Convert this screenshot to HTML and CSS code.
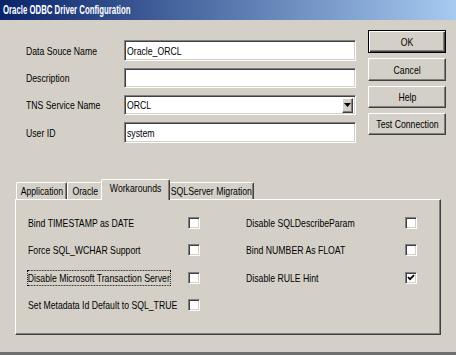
FILE: index.html
```html
<!DOCTYPE html>
<html>
<head>
<meta charset="utf-8">
<title>Oracle ODBC Driver Configuration</title>
<link rel="stylesheet" href="styles.css">
</head>
<body>
<div class="window">
  <div class="titlebar"><span class="t">Oracle ODBC Driver Configuration</span></div>
  <div class="main">
    <div class="form">
      <div class="row"><span class="label"><span class="t">Data Souce Name</span></span><div class="field"><span class="t">Oracle_ORCL</span></div></div>
      <div class="row"><span class="label"><span class="t">Description</span></span><div class="field short"></div></div>
      <div class="row"><span class="label"><span class="t">TNS Service Name</span></span><div class="field short select"><span class="t">ORCL</span><span class="arrow"><svg width="7" height="4" viewBox="0 0 7 4"><path d="M0 0H7L3.5 4Z" fill="#000"/></svg></span></div></div>
      <div class="row"><span class="label"><span class="t">User ID</span></span><div class="field"><span class="t">system</span></div></div>
    </div>
    <div class="buttons">
      <div class="btn default"><span class="t tc">OK</span></div>
      <div class="btn tall"><span class="t tc">Cancel</span></div>
      <div class="btn"><span class="t tc">Help</span></div>
      <div class="btn"><span class="t tc">Test Connection</span></div>
    </div>
  </div>
  <div class="tabs">
    <div class="tabstrip">
      <div class="tab tab-app"><span class="t tc">Application</span></div>
      <div class="tab tab-ora"><span class="t tc">Oracle</span></div>
      <div class="tab tab-work active"><span class="t tc">Workarounds</span></div>
      <div class="tab tab-sql"><span class="t tc">SQLServer Migration</span></div>
    </div>
    <div class="panel">
      <div class="col left">
        <div class="opt"><span class="text"><span class="t">Bind TIMESTAMP as DATE</span></span><span class="check"></span></div>
        <div class="opt"><span class="text"><span class="t">Force SQL_WCHAR Support</span></span><span class="check"></span></div>
        <div class="opt"><span class="text"><span class="t focus">Disable Microsoft Transaction Server</span></span><span class="check"></span></div>
        <div class="opt"><span class="text"><span class="t">Set Metadata Id Default to SQL_TRUE</span></span><span class="check"></span></div>
      </div>
      <div class="col right">
        <div class="opt"><span class="text"><span class="t">Disable SQLDescribeParam</span></span><span class="check"></span></div>
        <div class="opt"><span class="text"><span class="t">Bind NUMBER As FLOAT</span></span><span class="check"></span></div>
        <div class="opt"><span class="text"><span class="t">Disable RULE Hint</span></span><span class="check"><svg width="8" height="7" viewBox="0 0 8 7"><path d="M1 3.2L3 5.2L7 1.2" fill="none" stroke="#000" stroke-width="1.8"/></svg></span></div>
      </div>
    </div>
  </div>
</div>
</body>
</html>
```

FILE: styles.css
```css
* { box-sizing: border-box; }
html, body { margin: 0; padding: 0; }
body {
  width: 456px;
  height: 355px;
  overflow: hidden;
  background: #d4d0c8;
  color: #000;
  font-family: "Liberation Sans", Arial, sans-serif;
  font-size: 11px;
}
.t {
  display: inline-block;
  white-space: nowrap;
  transform: scaleX(0.79);
  transform-origin: left center;
}
.tc { transform-origin: center center; }
.window {
  height: 355px;
  display: flex;
  flex-direction: column;
  border-bottom: 3px solid #6f6f6f;
}
.titlebar {
  height: 20px;
  flex: none;
  display: flex;
  align-items: center;
  padding-left: 3px;
  background: linear-gradient(to right, #0a246a, #a6caf0);
  color: #fff;
  font-weight: bold;
  font-size: 12px;
}
.titlebar .t { transform: scaleX(0.65); }
.main {
  display: flex;
  padding: 10px 0 0 26px;
}
.form {
  display: flex;
  flex-direction: column;
  gap: 7px;
  margin-top: 10px;
}
.row { display: flex; align-items: center; }
.label { width: 98px; white-space: nowrap; }
.field {
  width: 232px;
  height: 21px;
  display: flex;
  align-items: center;
  padding: 0 2px;
  background: #fff;
  border: 1px solid;
  border-color: #808080 #fff #fff #808080;
  box-shadow: inset 1px 1px #404040, inset -1px -1px #d4d0c8;
}
.field.short { height: 20px; }
.select { justify-content: space-between; padding-right: 2px; }
.arrow {
  width: 11px;
  height: 15px;
  display: flex;
  align-items: center;
  justify-content: center;
  background: #d4d0c8;
  border: 1px solid;
  border-color: #fff #404040 #404040 #fff;
  box-shadow: inset -1px -1px #808080;
}
.buttons {
  width: 78px;
  margin-left: 12px;
  display: flex;
  flex-direction: column;
  gap: 5px;
}
.btn {
  height: 22px;
  display: flex;
  align-items: center;
  justify-content: center;
  border: 1px solid;
  border-color: #fff #404040 #404040 #fff;
  box-shadow: inset -1px -1px #808080;
}
.btn.tall { height: 23px; }
.btn.default {
  height: 23px;
  border-color: #000;
  box-shadow: inset 1px 1px #fff, inset -1px -1px #404040, inset -2px -2px #808080;
}
.tabs {
  width: 426px;
  margin: 36px 0 0 15px;
}
.tabstrip {
  height: 20px;
  display: flex;
  align-items: flex-end;
  padding-left: 1px;
}
.tab {
  height: 17px;
  display: flex;
  align-items: center;
  justify-content: center;
  border: 1px solid;
  border-bottom: none;
  border-color: #fff #404040 transparent #fff;
  box-shadow: inset -1px 0 #808080;
  border-radius: 2px 2px 0 0;
}
.tab-app { width: 51px; }
.tab-ora { width: 36px; }
.tab-work { width: 69px; }
.tab-sql { width: 86px; }
.tab.active {
  position: relative;
  z-index: 1;
  height: 21px;
  margin: 0 -2px -1px;
  padding-top: 2px;
  align-items: flex-start;
  background: #d4d0c8;
}
.panel {
  height: 136px;
  display: flex;
  padding: 9px 0 0 12px;
  border: 1px solid;
  border-color: #fff #404040 #404040 #fff;
  box-shadow: inset -1px -1px #808080;
}
.col {
  display: grid;
  grid-auto-rows: 27.5px;
  align-items: center;
}
.col.left { width: 218px; }
.opt { display: flex; align-items: center; }
.text { white-space: nowrap; }
.left .text { width: 160px; }
.right .text { width: 159px; }
.focus {
  border: 1px dotted #000;
  margin-left: -1px;
  padding: 1px 0;
}
.check {
  width: 12px;
  height: 12px;
  display: flex;
  align-items: center;
  justify-content: center;
  background: #fff;
  border: 1px solid;
  border-color: #808080 #fff #fff #808080;
  box-shadow: inset 1px 1px #404040, inset -1px -1px #d4d0c8;
}
```
